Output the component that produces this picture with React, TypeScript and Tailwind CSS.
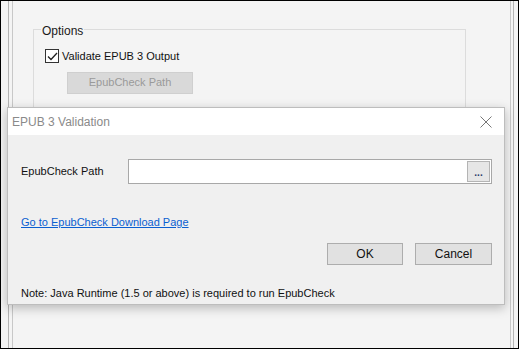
export default function App() {
  return (
    <div
      className="relative w-[519px] h-[349px] overflow-hidden border border-black bg-[#f4f4f4] text-[11px] text-[#1a1a1a]"
      style={{ fontFamily: '"Liberation Sans", Arial, sans-serif' }}
    >
      {/* background window frame */}
      <div className="h-full pl-[7px] pr-[4px] flex">
        <div className="flex-1 h-full border-x border-[#b4b4b4] pl-[3px] pr-[2px]">
          <div className="h-full border-x border-[#c8c8c8] pl-[20px] pr-[44px] pt-[28px]">
            {/* Options group */}
            <div className="relative h-[150px] border border-[#dcdcdc] pl-[11px] pt-[18px]">
              <span className="absolute -top-[8px] left-[7px] px-[1px] bg-[#f4f4f4] text-[12px] text-[#1a1a1a]">Options</span>
              <label className="flex items-center gap-[3px]">
                <span className="w-[14px] h-[14px] border border-[#333] bg-white flex items-center justify-center">
                  <svg width="11" height="9" viewBox="0 0 11 9">
                    <path d="M1 4.5 L4 7.5 L10 1" fill="none" stroke="#222" strokeWidth="1.3" />
                  </svg>
                </span>
                <span className="text-[#111]">Validate EPUB 3 Output</span>
              </label>
              <div className="mt-[7px] ml-[22px] w-[126px] h-[22px] bg-[#d9d9d9] border border-[#cfcfcf] flex items-center justify-center text-[#9a9a9a]">
                EpubCheck Path
              </div>
            </div>
          </div>
        </div>
      </div>

      {/* EPUB 3 Validation dialog */}
      <div className="absolute left-[6px] top-[106px] w-[498px] h-[198px] border border-[#bdbdbd] bg-[#f0f0f0] shadow-[0_3px_10px_rgba(0,0,0,0.25)] flex flex-col">
        <div className="h-[27px] bg-white flex items-center justify-between pl-[4px] pr-[12px]">
          <span className="text-[12px] text-[#8a8a8a]">EPUB 3 Validation</span>
          <svg width="12" height="12" viewBox="0 0 12 12">
            <path d="M0.5 0.5 L11.5 11.5 M11.5 0.5 L0.5 11.5" stroke="#777" strokeWidth="1" />
          </svg>
        </div>
        <div className="flex-1 flex flex-col pl-[13px] pr-[12px] pt-[24px]">
          <div className="flex items-center">
            <span className="w-[107px] text-[#111]">EpubCheck Path</span>
            <div className="flex-1 h-[25px] bg-white border border-[#a8a8a8] flex items-center justify-end pr-[1px]">
              <div className="w-[23px] h-[21px] bg-[#e6e6e6] border border-[#b4b4b4] flex items-center justify-center text-[10px] font-bold text-[#2a3a6a] leading-none pt-[3px]">
                ...
              </div>
            </div>
          </div>
          <a className="mt-[30px] self-start text-[#0b5fd1] underline">Go to EpubCheck Download Page</a>
          <div className="mt-[12px] flex justify-end gap-[12px]">
            <button className="w-[76px] h-[22px] bg-[#e1e1e1] border border-[#adadad] text-[12px] text-[#111]">OK</button>
            <button className="w-[77px] h-[22px] bg-[#e1e1e1] border border-[#adadad] text-[12px] text-[#111]">Cancel</button>
          </div>
          <p className="mt-[20px] text-[#111]">Note: Java Runtime (1.5 or above) is required to run EpubCheck</p>
        </div>
      </div>
    </div>
  );
}
